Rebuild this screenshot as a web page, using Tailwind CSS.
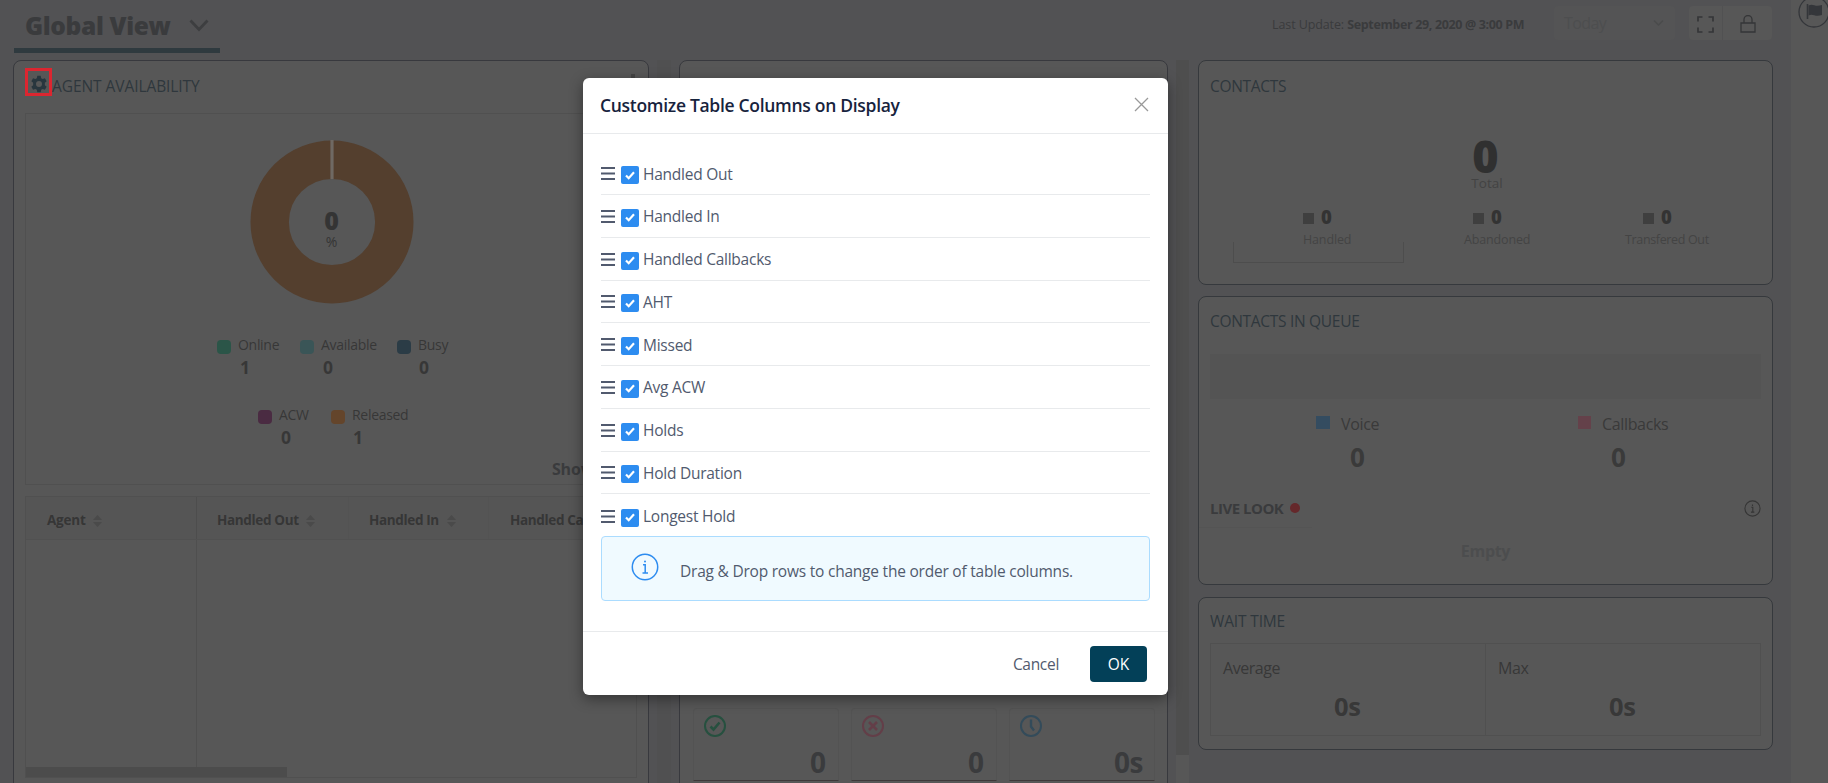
<!DOCTYPE html>
<html lang="en">
<head>
<meta charset="utf-8">
<title>Global View</title>
<script src="https://cdn.jsdelivr.net/npm/@tailwindcss/browser@4"></script>
</head>
<body class="w-[1828px] h-[783px] overflow-hidden bg-[#525254] font-['Open_Sans','Noto_Sans',sans-serif] text-[#3a3b3d] whitespace-nowrap">
<div class="relative flex w-[1828px] h-[783px] overflow-hidden">

  <div class="w-[1791px] flex flex-col">
    <!-- Top bar -->
    <header class="h-[60px] flex justify-between pl-[14px] pr-[19px]">
      <div class="w-[206px] h-[53px] border-b-[5px] border-[#2f3a3f] flex items-center pl-[11px] pb-[2px]">
        <span class="w-[164px] text-[24.5px] font-extrabold tracking-[-0.35px] leading-[46px] mt-[6px]">Global View</span>
        <svg class="w-[20px] h-[13px] mt-[5px]" viewBox="0 0 20 13" fill="none" stroke="#3d3e40" stroke-width="2.8"><path d="M1.5 1.5 10 10.5 18.5 1.5"/></svg>
      </div>
      <div class="flex pt-[6px] h-[40px]">
        <div class="w-[282px] text-[12.5px] leading-[37px] tracking-[-0.1px]">Last Update: <b class="tracking-[-0.35px]">September 29, 2020 @ 3:00 PM</b></div>
        <div class="w-[121px] mr-[14px] rounded bg-[#545455] flex items-center justify-between pl-[10px] pr-[11px] text-base tracking-[-0.600px] text-[#4d4e4f]">
          <span>Today</span>
          <svg class="w-[11px] h-[8px]" viewBox="0 0 11 8" fill="none" stroke="#4a4b4c" stroke-width="1.5"><path d="M1 1.5 5.500 6 10 1.500"/></svg>
        </div>
        <div class="w-[83px] rounded bg-[#575757] flex">
          <div class="w-[34px] border-r border-[#515152] flex items-center justify-center">
            <svg class="w-[17px] h-[17px] mt-0.5" viewBox="0 0 17 17" fill="none" stroke="#353638" stroke-width="1.700"><path d="M1 5.500V1H5.500M11.500 1H16V5.500M16 11.500V16H11.500M5.500 16H1V11.500"/></svg>
          </div>
          <div class="w-[49px] flex items-center justify-center">
            <svg class="w-[16px] h-[18px] mt-0.5" viewBox="0 0 16 18" fill="none" stroke="#353638" stroke-width="1.300"><path d="M1 8H15V17H1ZM4 8V4.500A4 4 0 0 1 12 4.500V8"/></svg>
          </div>
        </div>
      </div>
    </header>

    <div class="flex h-[723px] pl-[13px]">
      <!-- Agent availability -->
      <section class="w-[636px] h-[740px] rounded-lg border border-[#38393e] bg-[#575757] px-[11px]">
        <div class="h-[52px] flex pt-[7px]">
          <div class="w-[27px] h-[28px] border-[3px] border-[#dc2630] flex items-center justify-center">
            <svg class="w-[18px] h-[18px] mt-[3px]" viewBox="0 0 24 24" fill="#28363e"><path fill-rule="evenodd" d="M9.700 1h4.600l.6 3.200 2 1.100 3-1.100 2.300 4-2.400 2.100v3.400l2.400 2.100-2.300 4-3-1.100-2 1.100-.6 3.200H9.700l-.6-3.200-2-1.100-3 1.100-2.300-4 2.400-2.100v-3.400L1.800 8.200l2.300-4 3 1.100 2-1.100zM12 8a4 4 0 1 0 0 8 4 4 0 0 0 0-8z"/></svg>
          </div>
          <span class="mt-[7px] text-[15.500px] leading-[22px] text-[#2f373d] tracking-[-0.070px]">AGENT AVAILABILITY</span>
          <span class="ml-auto mr-0.5 mt-[6px] w-[4px] h-[5px] bg-[#444]"></span>
        </div>
        <div class="h-[372px] border border-[#505050]">
          <div class="grid justify-center mt-[25px] pl-px">
            <svg class="col-start-1 row-start-1 w-[166px] h-[166px]" viewBox="-83 -83 166 166"><circle r="62.300" fill="none" stroke="#543f2e" stroke-width="38.400"/><path d="M0-82V-43" stroke="#6f6963" stroke-width="3.200"/></svg>
            <div class="col-start-1 row-start-1 pt-[67px] text-center">
              <div class="text-[25px] leading-[28px] font-extrabold text-[#343434]">0</div>
              <div class="text-[14px] leading-[16px] text-[#353535]">%</div>
            </div>
          </div>
          <div class="flex pl-[191px] mt-[30px] text-[14px] leading-[20px] tracking-[-0.300px] text-[#373737]">
            <div class="w-[83px]"><div class="flex items-center"><i class="w-[14px] h-[14px] mt-1 rounded bg-[#2b5548] mr-[7px]"></i>Online</div><div class="pl-[23px] text-[17.500px] font-bold leading-[24px]">1</div></div>
            <div class="w-[97px]"><div class="flex items-center"><i class="w-[14px] h-[14px] mt-1 rounded bg-[#3a5557] mr-[7px]"></i>Available</div><div class="pl-[23px] text-[17.500px] font-bold leading-[24px]">0</div></div>
            <div><div class="flex items-center"><i class="w-[14px] h-[14px] mt-1 rounded bg-[#2b3c46] mr-[7px]"></i>Busy</div><div class="pl-[22px] text-[17.500px] font-bold leading-[24px]">0</div></div>
          </div>
          <div class="flex pl-[232px] mt-[26px] text-[14px] leading-[20px] tracking-[-0.300px] text-[#373737]">
            <div class="w-[73px]"><div class="flex items-center"><i class="w-[14px] h-[14px] mt-1 rounded bg-[#4a2b42] mr-[7px]"></i>ACW</div><div class="pl-[23px] text-[17.500px] font-bold leading-[24px]">0</div></div>
            <div><div class="flex items-center"><i class="w-[14px] h-[14px] mt-1 rounded bg-[#64452b] mr-[7px]"></i>Released</div><div class="pl-[22px] text-[17.500px] font-bold leading-[24px]">1</div></div>
          </div>
          <div class="pl-[526px] mt-[9px] text-base font-bold leading-[22px] tracking-[-0.200px]">Show All</div>
        </div>
        <div class="mt-[11px] h-[282px] border border-[#505050]">
          <div class="h-[43px] flex border-b border-[#515151] bg-[#555] text-[13.500px] font-bold leading-[39px] text-[#363636]">
            <div class="w-[171px] pl-[21px] pt-[5px] flex gap-[8px] items-center border-r border-[#4d4d4d]"><span class="w-[38px] tracking-[-0.200px]">Agent</span><svg class="w-[9px] h-[12px]" viewBox="0 0 9 12" fill="#4a4a4a"><path d="M0 5 4.500 0 9 5ZM0 7 4.500 12 9 7Z"/></svg></div>
            <div class="w-[152px] pl-[20px] pt-[5px] flex gap-[8px] items-center border-r border-[#535353]"><span class="w-[81px] tracking-[-0.350px]">Handled Out</span><svg class="w-[9px] h-[12px]" viewBox="0 0 9 12" fill="#4a4a4a"><path d="M0 5 4.500 0 9 5ZM0 7 4.500 12 9 7Z"/></svg></div>
            <div class="w-[140px] pl-[20px] pt-[5px] flex gap-[8px] items-center border-r border-[#535353]"><span class="w-[70px] tracking-[-0.350px]">Handled In</span><svg class="w-[9px] h-[12px]" viewBox="0 0 9 12" fill="#4a4a4a"><path d="M0 5 4.500 0 9 5ZM0 7 4.500 12 9 7Z"/></svg></div>
            <div class="pl-[21px] pt-[4px] tracking-[-0.350px]">Handled Callbacks</div>
          </div>
          <div class="w-[171px] h-[227px] border-r border-[#4f4f4f]"></div>
          <div class="w-[261px] h-[10px] bg-[#4c4c4c]"></div>
        </div>
      </section>

      <div class="w-[14px] ml-[8px] mr-[8px] bg-[#505051]"></div>

      <!-- Service tiles -->
      <section class="w-[489px] h-[740px] rounded-lg border border-[#38393e] bg-[#575757] pl-[13px] pt-[647px] flex gap-[12px]">
        <div class="w-[146px] h-[73px] rounded-t border border-[#535353] border-b-[#3e3839] pt-[5px] pl-[9px] pr-[12px]">
          <svg class="w-[24px] h-[24px]" viewBox="0 0 24 24" fill="none" stroke="#26503f" stroke-width="2"><circle cx="12" cy="12" r="10"/><path d="m7.500 12.500 3 3 6-7" stroke-width="2.600"/></svg>
          <div class="mt-[8px] text-right text-[28px] leading-[32px] font-bold">0</div>
        </div>
        <div class="w-[146px] h-[73px] rounded-t border border-[#535353] border-b-[#3e3839] pt-[5px] pl-[9px] pr-[12px]">
          <svg class="w-[24px] h-[24px]" viewBox="0 0 24 24" fill="none" stroke="#633e48" stroke-width="2"><circle cx="12" cy="12" r="10"/><path d="m8 8 8 8M16 8 8 16" stroke-width="2.600"/></svg>
          <div class="mt-[8px] text-right text-[28px] leading-[32px] font-bold">0</div>
        </div>
        <div class="w-[146px] h-[73px] rounded-t border border-[#535353] border-b-[#3e3839] pt-[5px] pl-[9px] pr-[11px]">
          <svg class="w-[24px] h-[24px]" viewBox="0 0 24 24" fill="none" stroke="#334b5a" stroke-width="2"><circle cx="12" cy="12" r="10"/><path d="M12 5.500V12.500L15 16.500" stroke-width="2.400"/></svg>
          <div class="mt-[8px] text-right text-[28px] leading-[32px] font-bold tracking-[-0.500px]">0s</div>
        </div>
      </section>

      <div class="w-[13px] ml-[8px] mr-[9px] bg-[#575757]"><div class="h-[695px] bg-[#4e4e4e]"></div></div>

      <!-- Contacts column -->
      <div class="w-[575px] flex flex-col gap-[11px]">
        <section class="h-[225px] rounded-lg border border-[#36393d] bg-[#575757]">
          <h2 class="pl-[11px] pt-[14px] text-[15.500px] leading-[22px] tracking-[-0.300px] text-[#2f373d]">CONTACTS</h2>
          <div class="text-center mt-[36px] text-[45px] leading-[46px] font-extrabold text-[#303030]">0</div>
          <div class="text-center text-[13.500px] leading-[16px] text-[#434343] -mt-[4px] pl-[3px]">Total</div>
          <div class="flex mt-[16px] pl-[34px] text-[12.500px] tracking-[-0.150px] text-[#444]">
            <div class="w-[171px] h-[56px] pl-[70px]"><div class="flex items-center text-[18.500px] leading-[20px] font-extrabold text-[#333]"><i class="w-[11px] h-[11px] mt-0.5 mr-[7px] bg-[#3f3f3f]"></i>0</div><div class="mt-[3px] leading-[20px]">Handled</div><div class="-ml-[70px] -mt-[8px] h-[21px] border border-t-0 border-[#4d4d4d]"></div></div>
            <div class="w-[169px] pl-[69px]"><div class="flex items-center text-[18.500px] leading-[20px] font-extrabold text-[#333]"><i class="w-[11px] h-[11px] mt-0.5 mr-[7px] bg-[#3f3f3f]"></i>0</div><div class="mt-[3px] leading-[20px] -ml-[9px]">Abandoned</div></div>
            <div class="w-[170px] pl-[70px]"><div class="flex items-center text-[18.500px] leading-[20px] font-extrabold text-[#333]"><i class="w-[11px] h-[11px] mt-0.5 mr-[7px] bg-[#3f3f3f]"></i>0</div><div class="mt-[3px] leading-[20px] -ml-[18px] tracking-[-0.350px]">Transfered Out</div></div>
          </div>
        </section>

        <section class="h-[289px] rounded-lg border border-[#36393d] bg-[#575757] px-[11px]">
          <h2 class="pt-[13px] text-[15.500px] leading-[22px] tracking-[-0.300px] text-[#2f373d]">CONTACTS IN QUEUE</h2>
          <div class="mt-[22px] h-[45px] bg-[#545454]"></div>
          <div class="flex pl-[106px] mt-[14px] text-base leading-[22px] tracking-[-0.350px] text-[#3a3a3a]">
            <div class="w-[262px]"><div class="flex items-center"><i class="w-[14px] h-[13px] mr-[11px] bg-[#344c60] -mt-1"></i>Voice</div><div class="mt-[9px] pl-[34px] text-[26px] leading-[26px] font-bold">0</div></div>
            <div><div class="flex items-center"><i class="w-[13px] h-[13px] mr-[11px] bg-[#64414a] -mt-1"></i>Callbacks</div><div class="mt-[9px] pl-[33px] text-[26px] leading-[26px] font-bold">0</div></div>
          </div>
          <div class="flex items-center mt-[27px] h-[22px]">
            <span class="w-[80px] text-[15px] font-bold tracking-[-0.500px]">LIVE LOOK</span>
            <i class="w-[10px] h-[10px] rounded-full bg-[#65282b]"></i>
            <svg class="ml-auto w-[17px] h-[17px]" viewBox="0 0 28 28" fill="none" stroke="#353535" stroke-width="1.800"><circle cx="14" cy="14" r="12.500"/><path d="M12 12h2.500v8M11.500 20h5.500M14 7.500v2.200"/></svg>
          </div>
          <div class="w-[113px] -ml-[11px] mt-[8px] h-px bg-[#545454]"></div>
          <div class="text-center mt-[13px] text-base leading-[20px] font-bold tracking-[-0.300px] text-[#4c4d4e]">Empty</div>
        </section>

        <section class="mt-px h-[153px] rounded-lg border border-[#36393d] bg-[#575757] px-[11px]">
          <h2 class="pt-[12px] text-[15.500px] leading-[22px] tracking-[-0.150px] text-[#2f373d]">WAIT TIME</h2>
          <div class="mt-[11px] h-[93px] flex border border-[#505050] text-[#383838]">
            <div class="w-[275px] border-r border-[#505050] pl-[12px] pt-[13px] text-base leading-[22px] tracking-[-0.450px]">Average<div class="mt-[14px] pl-[111px] text-[25.500px] leading-[26px] font-bold">0s</div></div>
            <div class="pl-[12px] pt-[13px] text-base leading-[22px] tracking-[-0.450px]">Max<div class="mt-[14px] pl-[111px] text-[25.500px] leading-[26px] font-bold">0s</div></div>
          </div>
        </section>
      </div>
    </div>
  </div>

  <!-- Side rail -->
  <aside class="w-[37px] bg-[#575757] overflow-hidden">
    <svg class="ml-[7px] -mt-[4px] w-[32px] h-[32px]" viewBox="0 0 32 32" fill="none" stroke="#34363a"><circle cx="16" cy="16" r="15" stroke-width="1.300"/><path d="M9.500 8V23" stroke-width="1.600"/><path d="M10.500 9.500c5-2.500 6 2 13.500-.5v10c-7 2.500-9-2-13.500.5z" fill="#34363a" stroke="none"/></svg>
  </aside>

  <!-- Dialog -->
  <div class="absolute left-[583px] top-[78px] w-[585px] h-[617px] rounded-md bg-white shadow-[0_4px_14px_rgba(0,0,0,0.4)] text-[#515a6e] flex flex-col">
    <div class="h-[56px] shrink-0 border-b border-[#e8eaec] flex justify-between pl-[17px] pr-[19px] pt-[15px]">
      <span class="text-[17.500px] leading-[25px] font-semibold text-[#17233d] tracking-[-0.300px]">Customize Table Columns on Display</span>
      <svg class="mt-[4px] w-[15px] h-[15px]" viewBox="0 0 15 15" stroke="#999" stroke-width="1.300"><path d="M1 1 14 14M14 1 1 14"/></svg>
    </div>
    <div id="rows" class="mx-[18px] mt-[18.250px] h-[383.750px]"></div>
    <div class="mx-[18px] h-[65px] shrink-0 rounded border border-[#abdcff] bg-[#f0faff] flex items-center">
      <svg class="ml-[29px] -mt-[4px] w-[28px] h-[28px]" viewBox="0 0 28 28" fill="none" stroke="#2d8cf0" stroke-width="1.500"><circle cx="14" cy="14" r="12.700"/><path d="M12 11.800h2.200v8.200M11.500 20h5.500"/><circle cx="14" cy="8.500" r="1" fill="#2d8cf0" stroke="none"/></svg>
      <span class="ml-[21px] mt-[7px] text-[15.500px] tracking-[-0.220px]">Drag &amp; Drop rows to change the order of table columns.</span>
    </div>
    <div class="mt-auto h-[64px] border-t border-[#e8eaec] flex items-center justify-end pr-[21px]">
      <span class="mr-[31px] mt-[3px] text-[15.500px] tracking-[-0.300px]">Cancel</span>
      <span class="w-[57px] h-[36px] mt-px rounded bg-[#034058] text-white font-medium text-[15.500px] leading-[37px] text-center">OK</span>
    </div>
  </div>
</div>
<template id="row">
  <div class="h-[42.750px] flex items-center border-b border-[#e8eaec] last:border-b-0">
    <svg class="mt-px w-[14px] h-[13px]" viewBox="0 0 14 13" stroke="#515a6e" stroke-width="2"><path d="M0 1H14M0 6.500H14M0 12H14"/></svg>
    <span class="ml-[6px] mt-[4px] w-[18px] h-[18px] rounded-[2px] bg-[#2d8cf0] flex items-center justify-center"><svg class="w-[10px] h-[9px]" viewBox="0 0 10 9" fill="none" stroke="#fff" stroke-width="2.200"><path d="M1 4.500 3.700 7.200 9 1.300"/></svg></span>
    <span class="name mt-[2px] ml-[4px] text-[15.500px] tracking-[-0.250px]"></span>
  </div>
</template>
<script>
const tpl = document.getElementById('row'), list = document.getElementById('rows');
['Handled Out','Handled In','Handled Callbacks','AHT','Missed','Avg ACW','Holds','Hold Duration','Longest Hold'].forEach(function (n) {
  const r = tpl.content.cloneNode(true);
  r.querySelector('.name').textContent = n;
  list.appendChild(r);
});
</script>
</body>
</html>
